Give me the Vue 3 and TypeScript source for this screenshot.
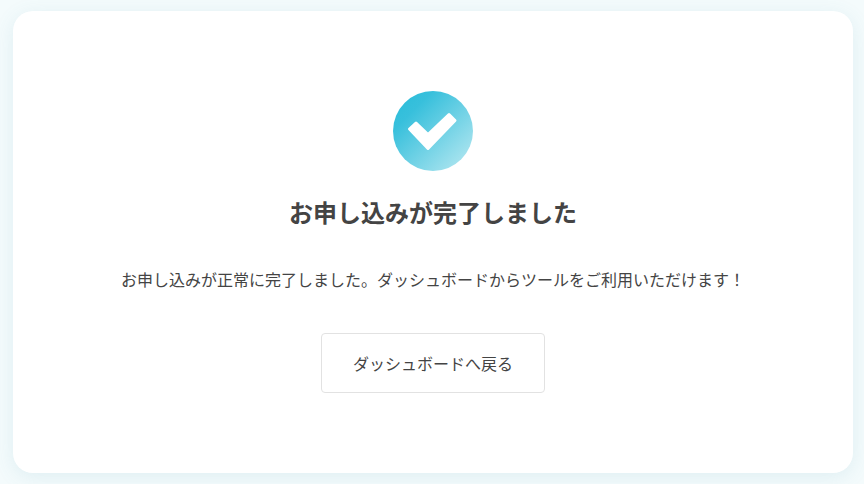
<script setup lang="ts">
const title: string = 'お申し込みが完了しました'
const message: string = 'お申し込みが正常に完了しました。ダッシュボードからツールをご利用いただけます\uFF01'
const action: string = 'ダッシュボードへ戻る'
</script>

<template>
  <main class="page">
    <section class="card">
      <div class="badge">
        <svg class="check" viewBox="0 0 80 80" width="80" height="80" aria-hidden="true">
          <path d="M16.5 38 L23 32 L35 43.5 L56 23.5 L62 29.5 L35 57.5 Z" fill="#fff" stroke="#fff" stroke-width="3" stroke-linejoin="round" />
        </svg>
      </div>
      <h1 class="title">{{ title }}</h1>
      <p class="message">{{ message }}</p>
      <a class="button">{{ action }}</a>
    </section>
  </main>
</template>

<style scoped>
.page {
  box-sizing: border-box;
  width: 864px;
  height: 484px;
  padding: 11px 11px 11px 13px;
  background: #f4fbfc;
  font-family: "Noto Sans CJK JP", "Noto Sans", sans-serif;
  color: #444;
  overflow: hidden;
}
.card {
  box-sizing: border-box;
  height: 462px;
  padding-top: 80px;
  background: #fff;
  border-radius: 20px;
  box-shadow: 0 4px 20px rgba(70, 150, 170, 0.12);
  display: flex;
  flex-direction: column;
  align-items: center;
}
.badge {
  width: 80px;
  height: 80px;
  border-radius: 50%;
  background: linear-gradient(135deg, #26bcd9 0%, #38c0dc 25%, #bdeaf2 100%);
  display: flex;
  align-items: center;
  justify-content: center;
}
.title {
  margin: 23px 0 0;
  font-size: 24px;
  line-height: 36px;
  font-weight: 700;
}
.message {
  margin: 37px 0 0;
  font-size: 16px;
  line-height: 24px;
}
.button {
  box-sizing: border-box;
  margin-top: 42px;
  width: 224px;
  height: 60px;
  border: 1px solid #e2e2e2;
  border-radius: 4px;
  font-size: 16px;
  display: flex;
  align-items: center;
  justify-content: center;
}
</style>
